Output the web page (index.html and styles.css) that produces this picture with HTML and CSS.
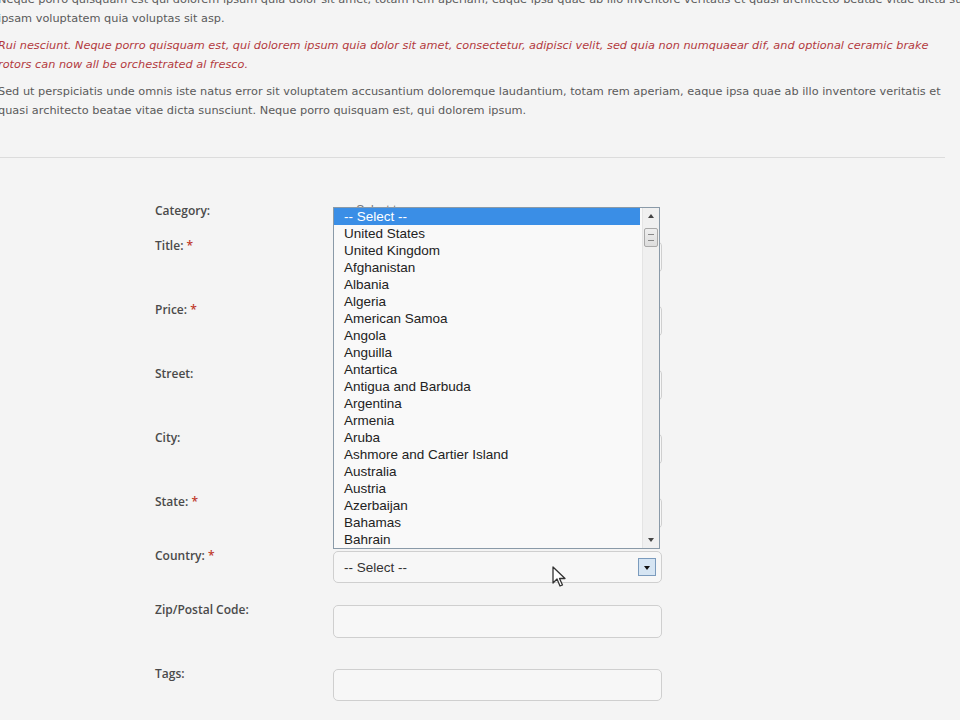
FILE: index.html
```html
<!DOCTYPE html>
<html>
<head>
<meta charset="utf-8">
<link rel="stylesheet" href="styles.css">
</head>
<body>
<div class="page">
  <div class="intro">
    <p class="txt"><span class="cut">Neque porro quisquam est qui dolorem ipsum quia dolor sit amet, totam rem aperiam, eaque ipsa quae ab illo inventore veritatis et quasi architecto beatae vitae dicta sunt explicabo. Nemo enim</span><br>ipsam voluptatem quia voluptas sit asp.</p>
    <p class="txt red">Rui nesciunt. Neque porro quisquam est, qui dolorem ipsum quia dolor sit amet, consectetur, adipisci velit, sed quia non numquaear dif, and optional ceramic brake rotors can now all be orchestrated al fresco.</p>
    <p class="txt">Sed ut perspiciatis unde omnis iste natus error sit voluptatem accusantium doloremque laudantium, totam rem aperiam, eaque ipsa quae ab illo inventore veritatis et quasi architecto beatae vitae dicta sunsciunt. Neque porro quisquam est, qui dolorem ipsum.</p>
  </div>
  <hr class="rule">
  <form class="form">
    <div class="row row-cat">
      <label class="lbl">Category:</label>
      <div class="field"><div class="mini-select">-- Select type --</div></div>
    </div>
    <div class="row">
      <label class="lbl">Title: <span class="req">*</span></label>
      <div class="field"><div class="input"></div></div>
    </div>
    <div class="row">
      <label class="lbl">Price: <span class="req">*</span></label>
      <div class="field"><div class="input"></div></div>
    </div>
    <div class="row">
      <label class="lbl">Street:</label>
      <div class="field"><div class="input"></div></div>
    </div>
    <div class="row">
      <label class="lbl">City:</label>
      <div class="field"><div class="input"></div></div>
    </div>
    <div class="row row-state">
      <label class="lbl">State: <span class="req">*</span></label>
      <div class="field"><div class="input"></div></div>
    </div>
    <div class="row row-country">
      <label class="lbl">Country: <span class="req">*</span></label>
      <div class="field country">
        <div class="listbox">
          <ul class="options">
            <li class="sel">-- Select --</li>
            <li>United States</li>
            <li>United Kingdom</li>
            <li>Afghanistan</li>
            <li>Albania</li>
            <li>Algeria</li>
            <li>American Samoa</li>
            <li>Angola</li>
            <li>Anguilla</li>
            <li>Antartica</li>
            <li>Antigua and Barbuda</li>
            <li>Argentina</li>
            <li>Armenia</li>
            <li>Aruba</li>
            <li>Ashmore and Cartier Island</li>
            <li>Australia</li>
            <li>Austria</li>
            <li>Azerbaijan</li>
            <li>Bahamas</li>
            <li>Bahrain</li>
          </ul>
          <div class="sbar">
            <div class="sb-arrow up"></div>
            <div class="sb-track"><div class="sb-thumb"></div></div>
            <div class="sb-arrow down"></div>
          </div>
        </div>
        <div class="select">
          <span>-- Select --</span>
          <span class="sel-btn"></span>
        </div>
        <svg class="cursor" width="14" height="22" viewBox="0 0 14 22"><path d="M1 1 L1 17 L5 13 L8 20 L10.5 19 L7.5 12.5 L13 12.5 Z" fill="#fff" stroke="#333" stroke-width="1.3" stroke-linejoin="round"/></svg>
      </div>
    </div>
    <div class="row row-zip">
      <label class="lbl">Zip/Postal Code:</label>
      <div class="field"><div class="input zip"></div></div>
    </div>
    <div class="row">
      <label class="lbl">Tags:</label>
      <div class="field"><div class="input"></div></div>
    </div>
  </form>
</div>
</body>
</html>
```
FILE: styles.css
```css
html, body {
  margin: 0;
  padding: 0;
  background: #f4f4f4;
  overflow: hidden;
}
.page {
  width: 960px;
  height: 720px;
  overflow: hidden;
  font-family: "DejaVu Sans", Verdana, sans-serif;
}
.intro {
  width: 948px;
  margin-left: -2px;
  margin-top: -10px;
}
.txt {
  margin: 0 0 8px;
  font-size: 11.3px;
  line-height: 19px;
  color: #5a5a5a;
}
.cut {
  white-space: nowrap;
}
.red {
  color: #b33a3e;
  font-style: italic;
}
.rule {
  margin: 37px 0 0;
  width: 945px;
  border: 0;
  border-top: 1px solid #dcdcdc;
  height: 0;
}
.form {
  padding-left: 155px;
  margin-top: 43px;
}
.row {
  display: flex;
  margin-bottom: 32px;
}
.lbl {
  width: 178px;
  flex: none;
  margin-top: -2px;
  font-family: "Open Sans", "Liberation Sans", sans-serif;
  font-weight: 600;
  font-size: 12px;
  line-height: 14px;
  color: #4a4a4a;
}
.req {
  color: #c0392b;
}
.field {
  width: 329px;
  position: relative;
}
.input {
  height: 30px;
  border: 1px solid #cfcfcf;
  border-radius: 5px;
  background: #f7f7f7;
}
.input.zip {
  height: 31px;
}
.row-cat {
  margin-bottom: 20px;
}
.row-cat .lbl {
  padding-top: 5px;
}
.mini-select {
  height: 20px;
  font-family: "Liberation Sans", Arial, sans-serif;
  font-size: 12px;
  line-height: 18px;
  color: #777;
  padding-left: 12px;
}
.row-state {
  margin-bottom: 22px;
}
.row-country {
  margin-bottom: 22px;
}
.row-zip {
  margin-bottom: 31px;
}
.select {
  height: 30px;
  border: 1px solid #cfcfcf;
  border-radius: 5px;
  background: #f7f7f7;
  display: flex;
  align-items: center;
  justify-content: space-between;
  padding: 0 5px 0 10px;
  font-family: "Liberation Sans", Arial, sans-serif;
  font-size: 13.5px;
  color: #333;
}
.sel-btn {
  width: 16px;
  height: 16px;
  border: 1px solid #7b9bbd;
  background: #d6e5f3;
  position: relative;
}
.sel-btn::after {
  content: "";
  position: absolute;
  left: 4.5px;
  top: 6.5px;
  border-left: 3.5px solid transparent;
  border-right: 3.5px solid transparent;
  border-top: 4px solid #111;
}
.listbox {
  position: absolute;
  left: 0;
  bottom: calc(100% + 2px);
  width: 325px;
  height: 340px;
  border: 1px solid #8a9aa8;
  background: #f9f9f9;
  display: flex;
  z-index: 5;
  overflow: hidden;
}
.options {
  list-style: none;
  margin: 0;
  padding: 0;
  flex: 1;
  font-family: "Liberation Sans", Arial, sans-serif;
  font-size: 13.5px;
  color: #222;
}
.options li {
  height: 17px;
  line-height: 17px;
  padding-left: 10px;
  white-space: nowrap;
}
.options li.sel {
  background: #3a8ee6;
  color: #fff;
  margin-right: 2px;
}
.sbar {
  width: 16px;
  flex: none;
  background: #f0f0f0;
  display: flex;
  flex-direction: column;
  border-left: 1px solid #e4e4e4;
}
.sb-arrow {
  height: 17px;
  position: relative;
}
.sb-arrow::after {
  content: "";
  position: absolute;
  left: 5px;
  border-left: 3px solid transparent;
  border-right: 3px solid transparent;
}
.sb-arrow.up::after {
  top: 6px;
  border-bottom: 4px solid #444;
}
.sb-arrow.down::after {
  top: 7px;
  border-top: 4px solid #444;
}
.sb-track {
  flex: 1;
  position: relative;
}
.sb-thumb {
  position: absolute;
  left: 1px;
  right: 1px;
  top: 3px;
  height: 17px;
  border: 1px solid #a9a9a9;
  border-radius: 2px;
  background: linear-gradient(#eee, #ddd);
}
.sb-thumb::after {
  content: "";
  position: absolute;
  left: 3px;
  right: 3px;
  top: 5px;
  height: 5px;
  border-top: 1px solid #888;
  border-bottom: 1px solid #888;
}
.cursor {
  position: absolute;
  left: 219px;
  top: 15px;
  z-index: 6;
}
```
